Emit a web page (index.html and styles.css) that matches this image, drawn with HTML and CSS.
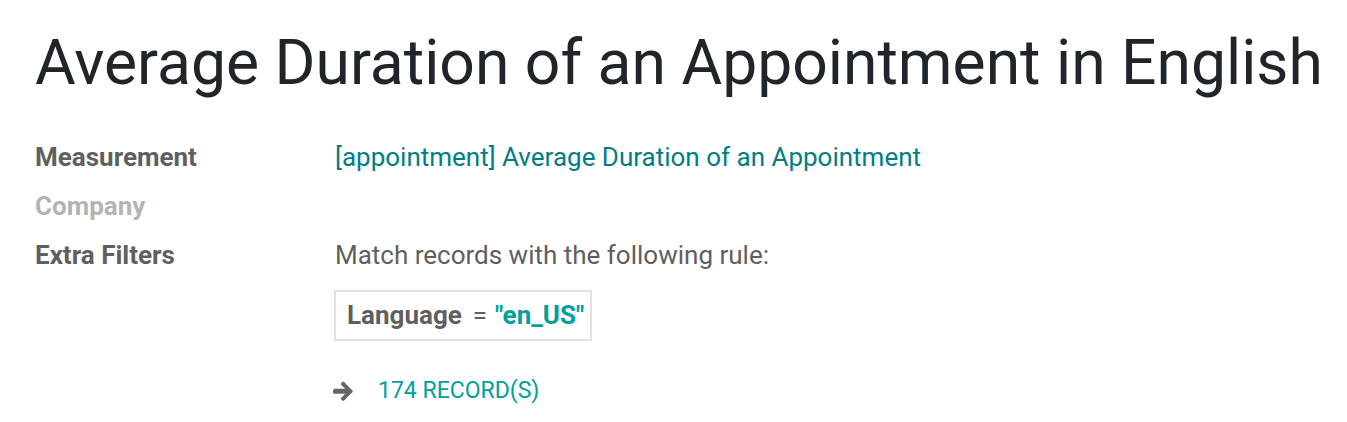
FILE: index.html
```html
<!DOCTYPE html>
<html>
<head>
<meta charset="utf-8">
<link rel="stylesheet" href="styles.css">
</head>
<body>
<div class="sheet">
  <h1 class="title">Average Duration of an Appointment in English</h1>
  <div class="fields">
    <div class="label">Measurement</div>
    <div class="value"><a class="link">[appointment] Average Duration of an Appointment</a></div>
    <div class="label muted">Company</div>
    <div class="value"></div>
    <div class="label">Extra Filters</div>
    <div class="value">
      <div class="rule-text">Match records with the following rule:</div>
      <div class="domain"><span class="dfield">Language</span><span class="dop">=</span><span class="dval">"en_US"</span></div>
      <div class="records">
        <svg class="arrow" viewBox="0 0 22 22" width="22" height="22"><path d="M1 8.8H12.2L8.3 4.9a1.3 1.3 0 0 1 0-1.8l1-1a1.3 1.3 0 0 1 1.8 0l8.3 8.3a1.3 1.3 0 0 1 0 1.8l-8.3 8.3a1.3 1.3 0 0 1-1.8 0l-1-1a1.3 1.3 0 0 1 0-1.8l3.9-3.9H1a1 1 0 0 1-1-1v-2.4a1 1 0 0 1 1-1z" fill="#666"/></svg>
        <span class="count">174 RECORD(S)</span>
      </div>
    </div>
  </div>
</div>
</body>
</html>
```
FILE: styles.css
```css
html, body {
  margin: 0;
  padding: 0;
  background: #fff;
}
body {
  font-family: Roboto, "Noto Sans", sans-serif;
  color: #212529;
}
.sheet {
  padding: 24px 35px 0 35px;
}
.title {
  font-weight: 400;
  font-size: 62.4px;
  line-height: 78px;
  margin: 0 0 39px 0;
  color: #212529;
  white-space: nowrap;
}
.fields {
  display: grid;
  grid-template-columns: 300px 1fr;
  row-gap: 17px;
  font-size: 26px;
  line-height: 32px;
}
.label {
  font-weight: 700;
  color: #5f5f5f;
}
.label.muted {
  color: #b3b3b3;
}
.value {
  color: #5f5f5f;
}
.link {
  color: #017e84;
  text-decoration: none;
}
.rule-text {
  margin-bottom: 19px;
}
.domain {
  display: inline-flex;
  align-items: center;
  border: 2px solid #dee2e6;
  padding: 7px 6px 8px 11px;
  margin-left: -1px;
}
.dfield {
  font-weight: 700;
  color: #5f5f5f;
}
.dop {
  margin: 0 8px 0 11px;
  color: #5f5f5f;
}
.dval {
  font-weight: 700;
  color: #00a09d;
}
.records {
  display: flex;
  align-items: center;
  margin-top: 34px;
}
.arrow {
  margin-left: -2px;
  margin-right: 23px;
}
.count {
  color: #00a09d;
  font-size: 23px;
}
```
